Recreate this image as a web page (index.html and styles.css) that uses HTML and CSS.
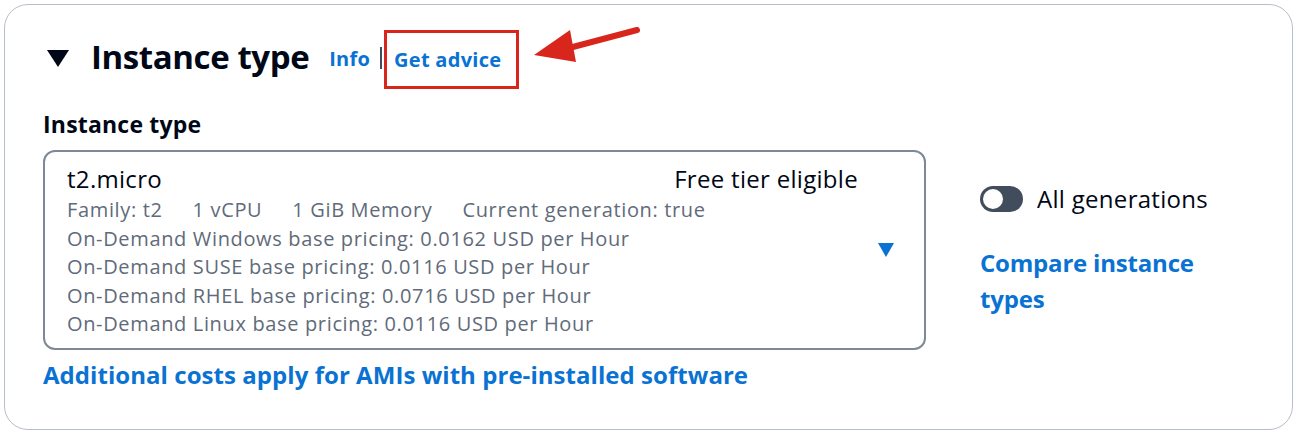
FILE: index.html
```html
<!DOCTYPE html>
<html>
<head>
<meta charset="utf-8">
<link rel="stylesheet" href="styles.css">
</head>
<body>
<div class="card">
  <div class="header">
    <span class="caret-down"></span>
    <h2 class="title">Instance type</h2>
    <a class="info">Info</a>
    <span class="sep"></span>
    <span class="advice-box"><a class="advice">Get advice</a></span>
    <svg class="arrow" width="120" height="50" viewBox="0 0 120 50">
      <line x1="113" y1="9" x2="45" y2="27" stroke="#d9261c" stroke-width="6" stroke-linecap="round"/>
      <polygon points="10,34 46,9 52,41" fill="#d9261c"/>
    </svg>
  </div>
  <div class="label">Instance type</div>
  <div class="row">
    <div class="select">
      <div class="sel-top">
        <span class="name">t2.micro</span>
        <span class="tag">Free tier eligible</span>
      </div>
      <div class="sel-body">
        <div class="details">
          <div class="meta"><span>Family: t2</span><span>1 vCPU</span><span>1 GiB Memory</span><span>Current generation: true</span></div>
          <div>On-Demand Windows base pricing: 0.0162 USD per Hour</div>
          <div>On-Demand SUSE base pricing: 0.0116 USD per Hour</div>
          <div>On-Demand RHEL base pricing: 0.0716 USD per Hour</div>
          <div>On-Demand Linux base pricing: 0.0116 USD per Hour</div>
        </div>
        <span class="caret-blue"></span>
      </div>
    </div>
    <div class="side">
      <div class="toggle-row">
        <span class="toggle"><span class="knob"></span></span>
        <span class="toggle-label">All generations</span>
      </div>
      <a class="compare">Compare instance types</a>
    </div>
  </div>
  <a class="costs">Additional costs apply for AMIs with pre-installed software</a>
</div>
</body>
</html>
```
FILE: styles.css
```css
* { box-sizing: border-box; }
html, body { margin: 0; background: #fff; }
body {
  padding: 4px 5px 4px 4px;
  font-family: "Open Sans", "Noto Sans", sans-serif;
  color: #000716;
}
a { color: #0972d3; text-decoration: none; }
.card {
  border: 1px solid #b6bec9;
  border-radius: 24px;
  height: 426px;
  padding: 26px 38px 0 38px;
}
.header {
  display: flex;
  align-items: center;
  height: 54px;
  position: relative;
}
.caret-down {
  width: 0; height: 0;
  border-left: 11px solid transparent;
  border-right: 11px solid transparent;
  border-top: 17px solid #000716;
  margin: 0 22px 0 4px;
}
.title {
  margin: 0 0 4px 0;
  font-size: 33px;
  font-weight: 700;
  letter-spacing: -0.4px;
}
.info {
  font-size: 20px;
  font-weight: 700;
  margin-left: 20px;
  letter-spacing: 0.2px;
}
.sep {
  width: 2px; height: 22px;
  background: #414d5c;
  margin-left: 10px;
}
.advice-box {
  border: 3px solid #d9261c;
  height: 59px;
  display: flex;
  align-items: center;
  padding: 0 15px 0 7px;
  margin-left: 2px;
  margin-top: 3px;
}
.advice { font-size: 20px; font-weight: 700; letter-spacing: 0.3px; }
.arrow {
  position: absolute;
  left: 481px;
  top: -10px;
}
.label {
  font-size: 23px;
  font-weight: 700;
  margin-top: 24px;
  line-height: 30px;
  letter-spacing: 0.2px;
}
.row {
  display: flex;
  align-items: flex-start;
  margin-top: 11px;
}
.select {
  width: 883px;
  height: 200px;
  border: 2px solid #7d8998;
  border-radius: 12px;
  padding: 10px 30px 0 22px;
}
.sel-top {
  display: flex;
  justify-content: space-between;
  padding-right: 36px;
  font-size: 24px;
  line-height: 34px;
  letter-spacing: 0.3px;
}
.sel-body {
  display: flex;
  align-items: center;
  justify-content: space-between;
}
.details {
  color: #5f6b7a;
  font-size: 20px;
  line-height: 28.5px;
  letter-spacing: 0.65px;
}
.meta { display: flex; gap: 30px; }
.caret-blue {
  width: 0; height: 0;
  border-left: 8px solid transparent;
  border-right: 8px solid transparent;
  border-top: 14px solid #0972d3;
  margin-top: -34px;
}
.side {
  margin-left: 54px;
  padding-top: 32px;
  width: 260px;
}
.toggle-row { display: flex; align-items: center; }
.toggle {
  width: 43px; height: 26px;
  border-radius: 13px;
  background: #414d5c;
  position: relative;
  display: inline-block;
}
.knob {
  position: absolute;
  left: 3px; top: 3px;
  width: 20px; height: 20px;
  border-radius: 50%;
  background: #fff;
}
.toggle-label { font-size: 24px; margin-left: 14px; letter-spacing: 0.3px; }
.compare {
  display: block;
  font-size: 24px;
  font-weight: 700;
  line-height: 36px;
  margin-top: 30px;
  letter-spacing: -0.2px;
}
.costs {
  display: inline-block;
  font-size: 24px;
  font-weight: 700;
  margin-top: 8px;
  letter-spacing: 0.05px;
}
```
